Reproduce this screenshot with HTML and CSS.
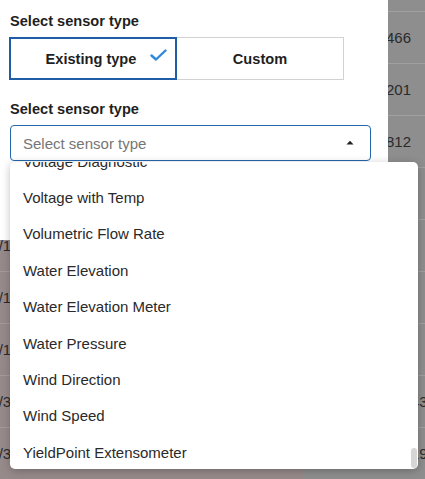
FILE: index.html
```html
<!DOCTYPE html>
<html lang="en">
  <head>
    <meta name="viewport" content="width=device-width" />
    <title>Select sensor type</title>
    <link rel="stylesheet" href="styles.css">
  </head>
  <body>
    <!-- table behind the drawer, dimmed by the backdrop -->
    <div class="table">
      <div class="row"><span class="cell date"></span><span class="cell num"></span></div>
      <div class="row"><span class="cell date"></span><span class="cell num">466</span></div>
      <div class="row"><span class="cell date"></span><span class="cell num">201</span></div>
      <div class="row"><span class="cell date"></span><span class="cell num">812</span></div>
      <div class="row"><span class="cell date"></span><span class="cell num"></span></div>
      <div class="row"><span class="cell date">03/10/2023</span><span class="cell num"></span></div>
      <div class="row"><span class="cell date">03/10/2023</span><span class="cell num"></span></div>
      <div class="row"><span class="cell date">03/10/2023</span><span class="cell num"></span></div>
      <div class="row"><span class="cell date">03/30/2023</span><span class="cell num">12343</span></div>
      <div class="row"><span class="cell date">03/30/2023</span><span class="cell num">10419</span></div>
    </div>

    <aside class="panel">
      <div class="label">Select sensor type</div>
      <div class="toggle">
        <button class="segment selected">
          Existing type
          <svg class="check" width="17" height="12" viewBox="0 0 17 12">
            <path d="M1.5 6.5 L6 10.5 L15.5 1.5" fill="none" stroke="#2f88dc" stroke-width="2.4" stroke-linecap="round" stroke-linejoin="round" />
          </svg>
        </button>
        <button class="segment">Custom</button>
      </div>

      <div class="label second">Select sensor type</div>
      <div class="select">
        <span class="placeholder">Select sensor type</span>
        <svg class="caret" width="8" height="5" viewBox="0 0 8 5">
          <path d="M0.5 4.5 L4 0.8 L7.5 4.5 Z" fill="#222" />
        </svg>

        <div class="menu">
          <ul class="options">
            <li>Voltage Diagnostic</li>
            <li>Voltage with Temp</li>
            <li>Volumetric Flow Rate</li>
            <li>Water Elevation</li>
            <li>Water Elevation Meter</li>
            <li>Water Pressure</li>
            <li>Wind Direction</li>
            <li>Wind Speed</li>
            <li>YieldPoint Extensometer</li>
          </ul>
          <span class="thumb"></span>
        </div>
      </div>
    </aside>
  </body>
</html>
```

FILE: styles.css
```css
body {
  margin: 0;
  background-color: #8e8e8e;
  font-family: "Liberation Sans", Arial, sans-serif;
  color: #2a2a2a;
  overflow: hidden;
}

/* dimmed table */
.table {
  margin-top: -40px;
}

.table .row {
  display: grid;
  grid-template-columns: 303px 1fr;
  height: 52px;
}

.table .cell {
  display: flex;
  align-items: center;
  font-size: 15px;
  white-space: nowrap;
  overflow: hidden;
  border-bottom: 1px solid rgba(255, 255, 255, 0.16);
}

.table .date {
  background-color: #978a8b;
  text-indent: -18px;
}

.table .num {
  padding-left: 83px;
}

/* drawer */
.panel {
  position: absolute;
  top: 0;
  left: 0;
  width: 388px;
  height: 240px;
  background-color: #fff;
  padding: 12px 0 0 10px;
  box-sizing: border-box;
}

.label {
  font-size: 14.6px;
  font-weight: bold;
  line-height: 18px;
  color: #1f1f1f;
}

.label.second {
  margin-top: 20px;
}

.toggle {
  display: grid;
  grid-template-columns: 168px 167px;
  margin: 7px 0 0 -1px;
  height: 43px;
}

.segment {
  position: relative;
  font-family: inherit;
  font-size: 14.6px;
  font-weight: bold;
  color: #1f1f1f;
  background-color: #fff;
  border: 1px solid #d2d2d2;
  border-left: none;
  padding: 0;
}

.segment.selected {
  border: 2px solid #1f5ea6;
  padding-right: 4px;
}

.check {
  position: absolute;
  top: 10px;
  right: 8px;
}

.select {
  position: relative;
  margin-top: 7px;
  width: 361px;
  height: 36px;
  box-sizing: border-box;
  border: 1px solid #2467ad;
  border-radius: 4px;
  display: flex;
  align-items: center;
  padding: 1px 16px 0 12px;
}

.placeholder {
  flex-grow: 1;
  font-size: 15px;
  color: #767676;
}

.caret {
  margin-top: -2px;
}

.menu {
  position: absolute;
  top: 36px;
  left: -1px;
  width: 408px;
  height: 307px;
  background-color: #fff;
  border-radius: 5px;
  box-shadow: 0 2px 8px rgba(0, 0, 0, 0.25);
  overflow: hidden;
}

.options {
  list-style: none;
  margin: -19px 0 0;
  padding: 0;
}

.options li {
  height: 36.4px;
  display: flex;
  align-items: center;
  padding-left: 13px;
  font-size: 15px;
  color: #2a2a2a;
}

.thumb {
  position: absolute;
  right: 1px;
  bottom: 1px;
  width: 6px;
  height: 20px;
  border-radius: 4px;
  background-color: #d6d6d6;
}
```
